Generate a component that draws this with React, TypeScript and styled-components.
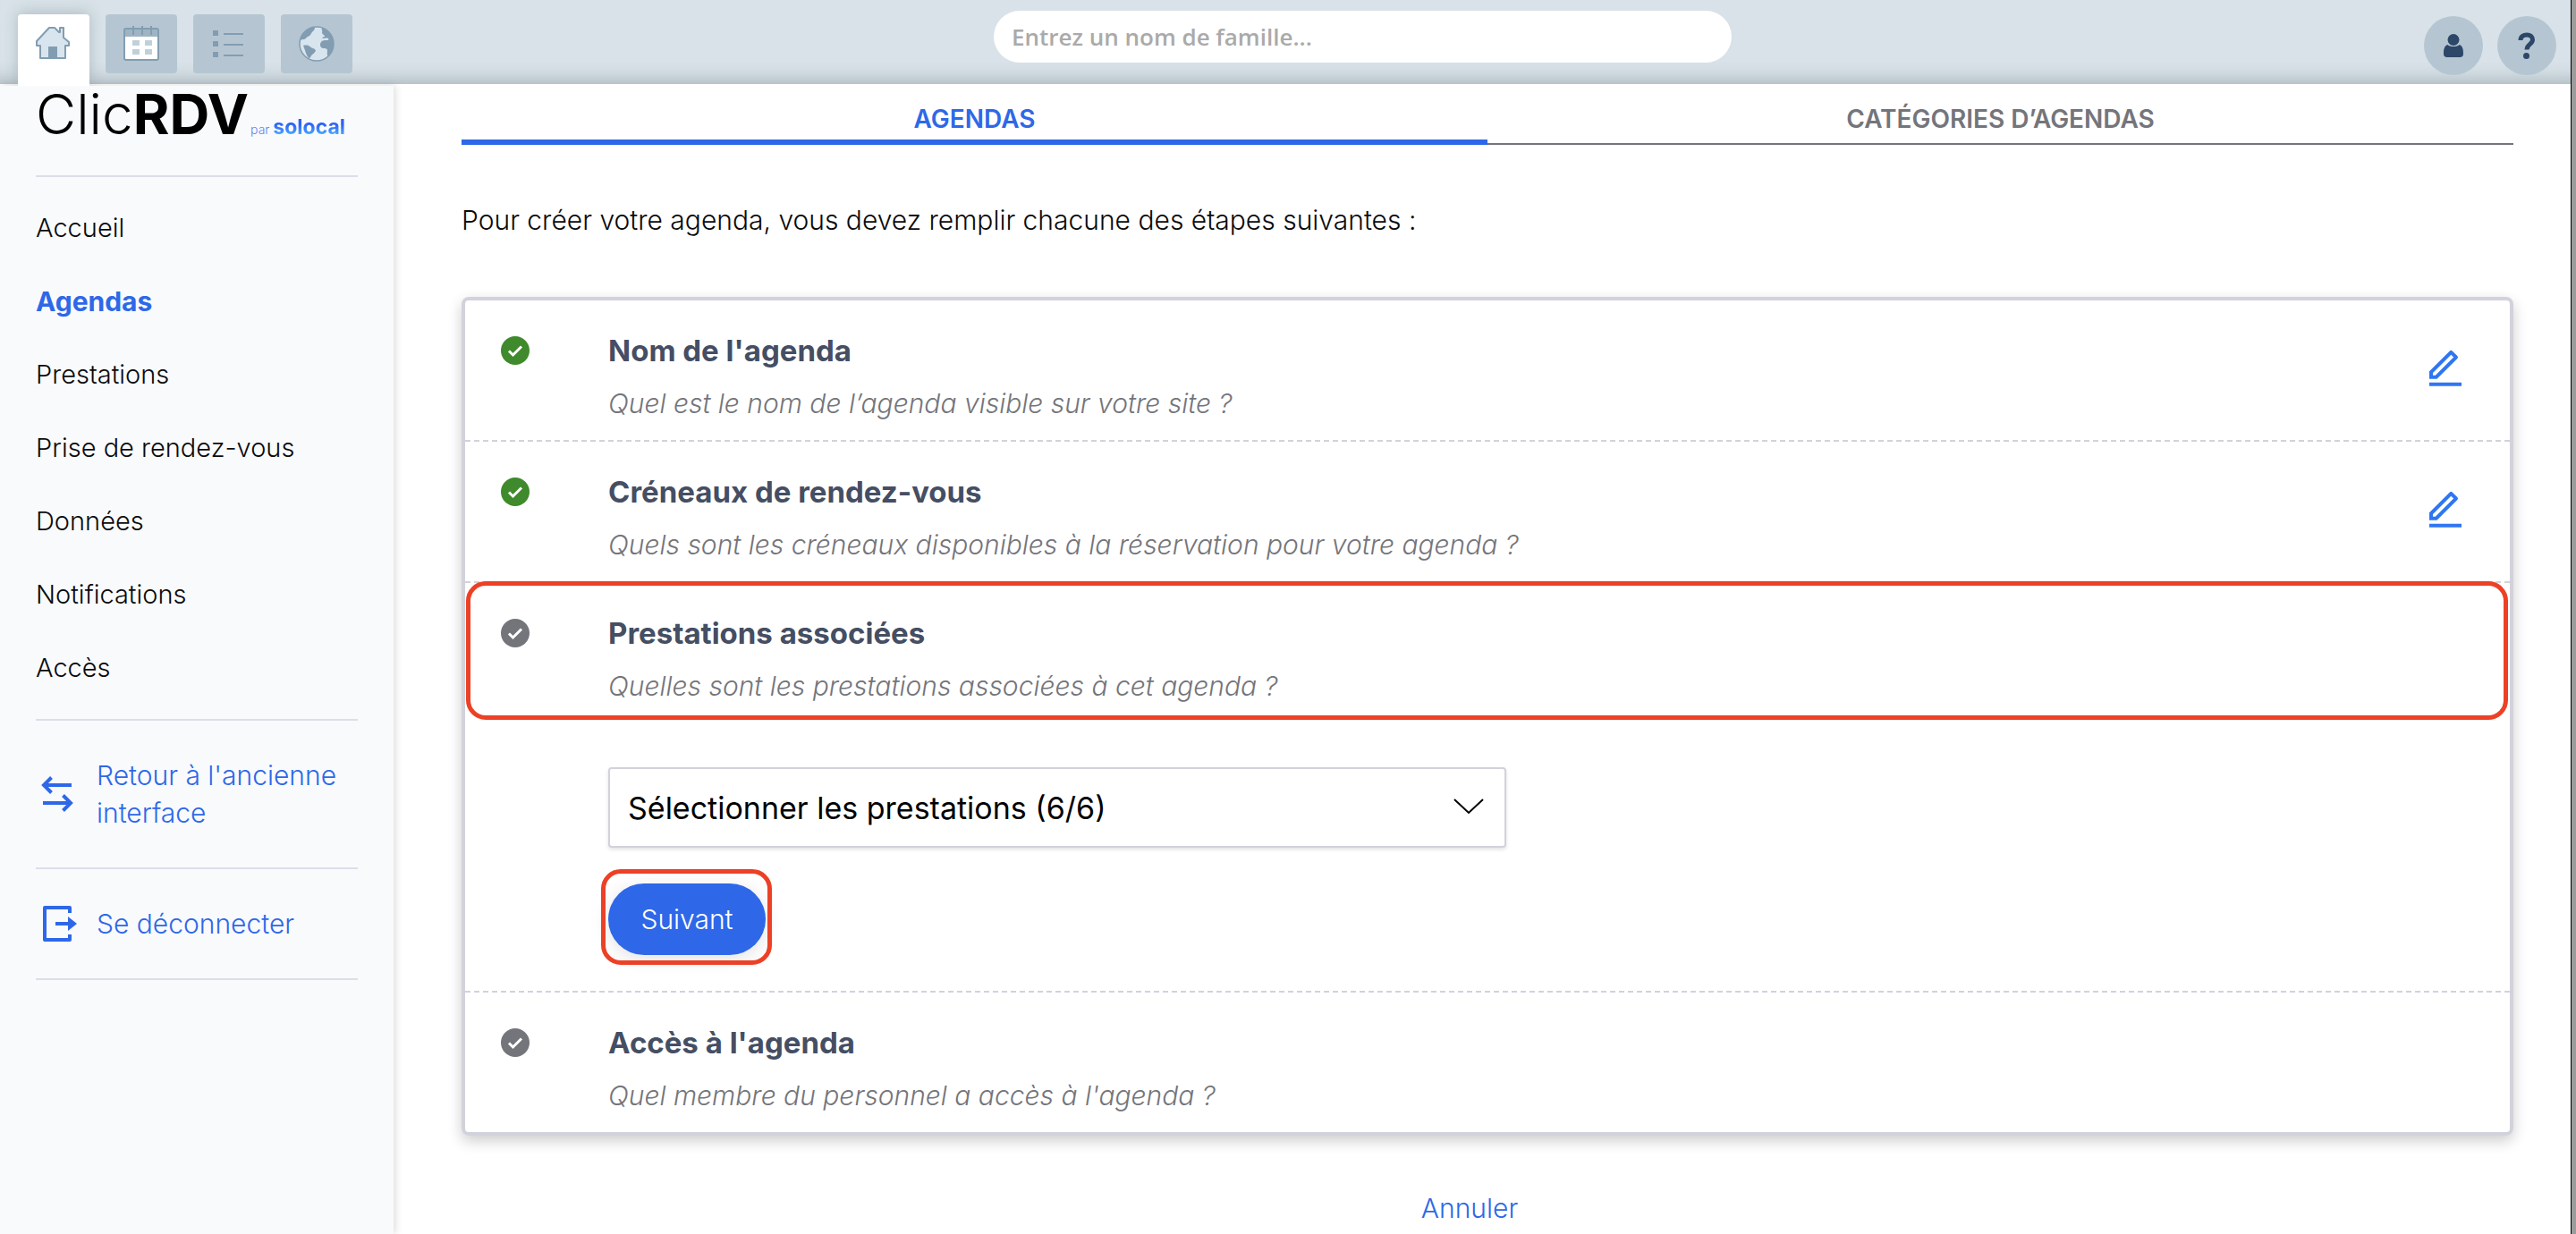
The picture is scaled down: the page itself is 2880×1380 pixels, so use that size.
import React from "react";
import styled, { createGlobalStyle, css } from "styled-components";

const color = {
  blue: "#2e68e8",
  text: "#0b0b0d",
  title: "#454e63",
  muted: "#74757b",
  border: "#d2d2dc",
  rule: "#dcdee8",
  header: "#d8e2e8",
  headerTile: "#b5c6d2",
  headerInk: "#829db1",
  navy: "#2d4769",
  alert: "#ec4126",
};

const GlobalStyle = createGlobalStyle`
  *, *::before, *::after { box-sizing: border-box; }
  body {
    margin: 0;
    background: #9c9c9c;
    color: ${color.text};
    font-family: Inter, "Liberation Sans", sans-serif;
    font-size: 30px;
    font-weight: 300;
    line-height: 42px;
  }
  button, input, select { font: inherit; color: inherit; margin: 0; }
  h2, p, ul, ol { margin: 0; padding: 0; }
  ul, ol { list-style: none; }
  a { color: inherit; text-decoration: none; }
  svg { display: block; flex: none; }
`;

const Shell = styled.div`
  display: flex;
  flex-direction: column;
  min-height: 100vh;
  margin-right: 5px;
  border-right: 1px solid #000;
  background: #fff;
`;

/* ---------- Header ---------- */

const Header = styled.header`
  display: grid;
  grid-template-columns: 1111fr 825fr 938fr;
  align-items: start;
  height: 94px;
  background: ${color.header};
  box-shadow: inset 0 -24px 20px -20px rgba(60, 80, 80, 0.3);
`;

const ModuleTabs = styled.nav`
  display: flex;
  gap: 18px;
  padding: 16px 0 0 20px;
`;

const ModuleTab = styled.button<{ $active?: boolean }>`
  display: flex;
  align-items: center;
  justify-content: center;
  width: 80px;
  height: 66px;
  padding: 0;
  border: 0;
  border-radius: 4px;
  background: ${color.headerTile};
  ${(p) =>
    p.$active &&
    css`
      height: 80px;
      padding-bottom: 16px;
      border-radius: 4px 4px 0 0;
      background: #fff;
      box-shadow: 0 -2px 16px rgba(60, 80, 90, 0.25);
      clip-path: inset(-16px -16px 0 -16px);
    `}
`;

const Search = styled.input`
  width: 100%;
  height: 58px;
  margin-top: 12px;
  padding: 0 20px;
  border: 0;
  border-radius: 29px;
  background: #fff;
  font-family: "Open Sans", "Noto Sans", sans-serif;
  font-size: 26px;
  font-weight: 600;
  &::placeholder {
    color: #aaa;
    opacity: 1;
  }
`;

const HeaderActions = styled.div`
  display: flex;
  justify-content: flex-end;
  gap: 16px;
  padding: 18px 16px 0 0;
`;

const RoundButton = styled.button`
  display: flex;
  align-items: center;
  justify-content: center;
  width: 66px;
  height: 66px;
  padding: 0;
  border: 0;
  border-radius: 50%;
  background: ${color.headerTile};
`;

/* ---------- Sidebar ---------- */

const Body = styled.div`
  display: flex;
  flex: 1;
`;

const Sidebar = styled.aside`
  flex: none;
  width: 440px;
  margin-top: 2px;
  padding: 0 40px;
  background: #f9fafc;
  box-shadow: 2px 0 8px rgba(0, 0, 0, 0.14);
`;

const Logo = styled.a`
  display: flex;
  align-items: baseline;
  height: 100px;
  color: #000;
  font-size: 62px;
  line-height: 64px;
`;

const LogoStrong = styled.strong`
  font-weight: 700;
`;

const LogoBy = styled.span`
  margin: 0 4px 0 2px;
  color: #5d84ee;
  font-size: 14px;
`;

const LogoBrand = styled.span`
  background: linear-gradient(#2f62f5 40%, #46a8ff 80%);
  background-clip: text;
  color: transparent;
  font-size: 23px;
  font-weight: 700;
  line-height: 28px;
`;

const NavList = styled.ul`
  padding: 16px 0;
  border-top: 2px solid ${color.rule};
`;

const NavItem = styled.li`
  display: flex;
  align-items: center;
  height: 82px;
`;

const NavLink = styled.a<{ $active?: boolean }>`
  font-size: 29px;
  ${(p) => p.$active && `color: ${color.blue}; font-size: 30px; font-weight: 700;`}
`;

const SideAction = styled.a`
  display: flex;
  align-items: center;
  gap: 20px;
  padding: 40px 0;
  border-top: 2px solid ${color.rule};
  color: ${color.blue};
`;

const SideEnd = styled.hr`
  margin: 0;
  border: 0;
  border-top: 2px solid ${color.rule};
`;

/* ---------- Main ---------- */

const Main = styled.main`
  flex: 1;
  padding: 0 64px 0 76px;
`;

const Tabs = styled.div`
  display: flex;
  height: 68px;
`;

const Tab = styled.button<{ $active?: boolean }>`
  flex: 1;
  padding: 12px 0 0;
  border: 0;
  border-bottom: 2px solid ${color.muted};
  background: none;
  color: ${color.muted};
  font-size: 28px;
  font-weight: 600;
  ${(p) =>
    p.$active &&
    css`
      border-color: ${color.blue};
      box-shadow: inset 0 -4px ${color.blue};
      color: ${color.blue};
    `}
`;

const Intro = styled.p`
  padding: 63px 0 65px;
`;

const Card = styled.ol`
  border: 4px solid ${color.border};
  border-radius: 8px;
  box-shadow: 0 6px 16px rgba(0, 0, 0, 0.2);
`;

const Step = styled.li`
  & + & {
    border-top: 2px dashed ${color.border};
  }
`;

const StepHead = styled.div`
  position: relative;
  display: grid;
  grid-template-columns: 32px 1fr 48px;
  column-gap: 88px;
  align-items: start;
  min-height: 156px;
  padding: 32px 48px 18px 40px;
`;

const StepTexts = styled.div`
  display: flex;
  flex-direction: column;
  gap: 14px;
`;

const StepTitle = styled.h2`
  color: ${color.title};
  font-size: 33px;
  font-weight: 700;
  line-height: 48px;
`;

const StepHint = styled.p`
  color: ${color.muted};
  font-style: italic;
`;

const CheckIcon = styled.svg<{ $done?: boolean }>`
  margin-top: 8px;
  color: ${(p) => (p.$done ? "#3f8a2c" : "#74757b")};
`;

const EditButton = styled.button`
  margin-top: 20px;
  padding: 0;
  border: 0;
  background: none;
  color: #2f76f3;
`;

const StepBody = styled.div`
  display: flex;
  flex-direction: column;
  align-items: flex-start;
  gap: 40px;
  padding: 50px 48px 40px 160px;
`;

const SelectBox = styled.div`
  position: relative;
  width: 100%;
  max-width: 1004px;
`;

const Select = styled.select`
  display: block;
  width: 100%;
  height: 90px;
  padding: 2px 80px 0 20px;
  border: 2px solid ${color.border};
  border-radius: 4px;
  background: #fff;
  box-shadow: 0 2px 4px rgba(0, 0, 0, 0.12);
  appearance: none;
  color: #000;
  font-size: 34px;
  font-weight: 400;
`;

const Chevron = styled.svg`
  position: absolute;
  top: 34px;
  right: 25px;
  pointer-events: none;
`;

const ButtonWrap = styled.div`
  position: relative;
`;

const PrimaryButton = styled.button`
  display: block;
  height: 80px;
  min-width: 176px;
  padding: 0 34px;
  border: 0;
  border-radius: 40px;
  background: ${color.blue};
  box-shadow: 0 4px 20px rgba(0, 0, 0, 0.12);
  color: #fff;
`;

const Highlight = styled.span<{ $inset: string }>`
  position: absolute;
  inset: ${(p) => p.$inset};
  border: 5px solid ${color.alert};
  border-radius: 22px;
  pointer-events: none;
`;

const Footer = styled.div`
  display: flex;
  justify-content: center;
  padding: 60px 40px 0 0;
`;

const CancelButton = styled.button`
  padding: 0;
  border: 0;
  background: none;
  color: ${color.blue};
`;

/* ---------- Icons ---------- */

const HomeIcon = () => (
  <svg width="40" height="40" viewBox="0 0 40 40" aria-hidden="true">
    <path
      d="M5 37V23H1v-5L15 3h6l5 5h1V3h4v11l6 5v4h-4v14z"
      fill="#d9e5ee"
      stroke={color.headerInk}
      strokeWidth="2"
      strokeLinejoin="round"
    />
    <path d="M14 24h10v13H14z" fill={color.headerInk} />
  </svg>
);

const CalendarIcon = () => (
  <svg width="40" height="40" viewBox="0 0 40 40" aria-hidden="true">
    <rect x="1" y="3" width="38" height="35" rx="2" fill="#fff" stroke={color.headerInk} strokeWidth="2" />
    <path d="M2 4h36v8H2z" fill="#9fb4c3" />
    <path d="M11 0v10M21 0v10M31 0v10" stroke={color.headerInk} strokeWidth="2" />
    <path d="M10 16h8v6h-8zM24 16h8v6h-8zM10 26h8v6h-8zM24 26h8v6h-8z" fill="#c0d0db" />
  </svg>
);

const ListIcon = () => (
  <svg width="40" height="40" viewBox="0 0 40 40" aria-hidden="true">
    <path d="M2 5h6v6H2zM2 17h6v6H2zM2 29h6v6H2z" fill={color.headerInk} />
    <path d="M14 9h22M14 21h22M14 33h22" stroke={color.headerInk} strokeWidth="2" />
  </svg>
);

const GlobeIcon = () => (
  <svg width="40" height="40" viewBox="0 0 40 40" aria-hidden="true">
    <circle cx="20" cy="20" r="19" fill="#d9e5ee" stroke={color.headerInk} strokeWidth="1.500" />
    <path
      d="M13 2C8 4 3 9 1.500 16c1 0 2-1 3.500-1 3 0 3-2 5-3 2-.5 3-2 4-3.500C15 6 18 5 18 2c-2-.7-4-.5-5 0zM5 22c3-1 6-.5 8 1.500 2 1.500 5 1.500 6 4-1 3-4 4-5.500 6.500-.5 1.500-1 2-2 2C8 33 8 29 5 22zM26 2c-1 2 1 4 0 6 1 2 3 2 3 4l-3 1 1 1c2 0 4-1 6 0 1 1 0 2-1 2-3 0-6 0-7 2-2 3-1 6 2 7 3 0 5 0 5 3-.5 2 0 4 0 6 3-2 7-7 7-14C39 11 33 4 26 2z"
      fill={color.headerInk}
    />
  </svg>
);

const UserIcon = () => (
  <svg width="24" height="28" viewBox="0 0 24 28" fill={color.navy} aria-hidden="true">
    <circle cx="12" cy="7.500" r="6.500" />
    <path d="M5.500 13C8 15.800 16 15.800 18.500 13 22 14 23 18 23 22v1.500c0 2-1.500 3.500-3.500 3.500h-15C2.500 27 1 25.500 1 23.500V22c0-4 1-8 4.500-9z" />
  </svg>
);

const HelpIcon = () => (
  <svg width="20" height="30" viewBox="0 0 20 30" fill="none" aria-hidden="true">
    <path
      d="M3 9C3 5 6 3 10 3s6.500 2 6.500 5.500c0 5-6.500 5-6.500 11"
      stroke={color.navy}
      strokeWidth="5"
    />
    <circle cx="9.500" cy="26.500" r="3.500" fill={color.navy} />
  </svg>
);

const SwapIcon = () => (
  <svg width="48" height="40" viewBox="0 4 48 40" fill="none" stroke="currentColor" strokeWidth="4" aria-hidden="true">
    <path d="M40 14H9M17.500 5.500 9 14l8.500 8.500M8 34h31M30.500 25.500 39 34l-8.500 8.500" />
  </svg>
);

const ExitIcon = () => (
  <svg width="48" height="40" viewBox="0 4 48 40" aria-hidden="true">
    <path d="M38 12V6H10v36h28v-6" fill="none" stroke="currentColor" strokeWidth="4" strokeLinejoin="round" />
    <path d="M22 22h14v-6l10 8-10 8v-6H22z" fill="currentColor" />
  </svg>
);

const EditIcon = () => (
  <svg width="48" height="48" viewBox="0 0 24 24" fill="currentColor" aria-hidden="true">
    <path d="M6.414 15.890 16.556 5.748l-1.414-1.414L5 14.476v1.414h1.414zm.829 2H3v-4.243L14.435 2.212a1 1 0 0 1 1.414 0l2.829 2.829a1 1 0 0 1 0 1.414L7.243 17.890zM3 19.890h18v2H3v-2z" />
  </svg>
);

const Check = ({ done }: { done?: boolean }) => (
  <CheckIcon $done={done} width="32" height="32" viewBox="0 0 32 32" role="img" aria-label={done ? "Terminé" : "À faire"}>
    <circle cx="16" cy="16" r="16" fill="currentColor" />
    <path d="M9 16.500l4.500 4.500L23 11.500" fill="none" stroke="#fff" strokeWidth="3" />
  </CheckIcon>
);

/* ---------- Page ---------- */

const navItems = [
  "Accueil",
  "Agendas",
  "Prestations",
  "Prise de rendez-vous",
  "Données",
  "Notifications",
  "Accès",
];

interface StepData {
  title: string;
  hint: string;
  done?: boolean;
  current?: boolean;
}

const steps: StepData[] = [
  { title: "Nom de l'agenda", hint: "Quel est le nom de l’agenda visible sur votre site ?", done: true },
  {
    title: "Créneaux de rendez-vous",
    hint: "Quels sont les créneaux disponibles à la réservation pour votre agenda ?",
    done: true,
  },
  { title: "Prestations associées", hint: "Quelles sont les prestations associées à cet agenda ?", current: true },
  { title: "Accès à l'agenda", hint: "Quel membre du personnel a accès à l'agenda ?" },
];

export default function App() {
  return (
    <>
      <GlobalStyle />
      <Shell>
        <Header>
          <ModuleTabs aria-label="Modules">
            <ModuleTab $active aria-label="Accueil"><HomeIcon /></ModuleTab>
            <ModuleTab aria-label="Calendrier"><CalendarIcon /></ModuleTab>
            <ModuleTab aria-label="Liste"><ListIcon /></ModuleTab>
            <ModuleTab aria-label="Site"><GlobeIcon /></ModuleTab>
          </ModuleTabs>
          <Search type="search" aria-label="Nom de famille" placeholder="Entrez un nom de famille..." />
          <HeaderActions>
            <RoundButton aria-label="Compte"><UserIcon /></RoundButton>
            <RoundButton aria-label="Aide"><HelpIcon /></RoundButton>
          </HeaderActions>
        </Header>

        <Body>
          <Sidebar>
            <Logo href="#">
              Clic<LogoStrong>RDV</LogoStrong>
              <LogoBy>par</LogoBy>
              <LogoBrand>solocal</LogoBrand>
            </Logo>
            <NavList>
              {navItems.map((item) => (
                <NavItem key={item}>
                  <NavLink href="#" $active={item === "Agendas"}>{item}</NavLink>
                </NavItem>
              ))}
            </NavList>
            <SideAction href="#">
              <SwapIcon />
              <span>Retour à l'ancienne interface</span>
            </SideAction>
            <SideAction href="#">
              <ExitIcon />
              <span>Se déconnecter</span>
            </SideAction>
            <SideEnd />
          </Sidebar>

          <Main>
            <Tabs role="tablist">
              <Tab role="tab" aria-selected="true" $active>AGENDAS</Tab>
              <Tab role="tab" aria-selected="false">CATÉGORIES D’AGENDAS</Tab>
            </Tabs>
            <Intro>Pour créer votre agenda, vous devez remplir chacune des étapes suivantes :</Intro>
            <Card>
              {steps.map((step) => (
                <Step key={step.title}>
                  <StepHead>
                    <Check done={step.done} />
                    <StepTexts>
                      <StepTitle>{step.title}</StepTitle>
                      <StepHint>{step.hint}</StepHint>
                    </StepTexts>
                    {step.done && (
                      <EditButton aria-label={`Modifier : ${step.title}`}><EditIcon /></EditButton>
                    )}
                    {step.current && <Highlight $inset="-2px 2px 3px 1px" />}
                  </StepHead>
                  {step.current && (
                    <StepBody>
                      <SelectBox>
                        <Select aria-label="Prestations">
                          <option>Sélectionner les prestations (6/6)</option>
                        </Select>
                        <Chevron width="34" height="20" viewBox="0 0 34 20" fill="none" stroke="#000" strokeWidth="2" aria-hidden="true">
                          <path d="M1 2l16 15L33 2" />
                        </Chevron>
                      </SelectBox>
                      <ButtonWrap>
                        <PrimaryButton>Suivant</PrimaryButton>
                        <Highlight $inset="-16px -7px -11px -8px" />
                      </ButtonWrap>
                    </StepBody>
                  )}
                </Step>
              ))}
            </Card>
            <Footer>
              <CancelButton>Annuler</CancelButton>
            </Footer>
          </Main>
        </Body>
      </Shell>
    </>
  );
}
